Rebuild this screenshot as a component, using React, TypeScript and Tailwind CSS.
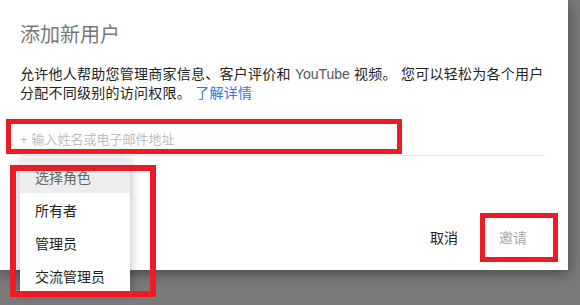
import React from "react";

const font = "font-['Liberation_Sans','Noto_Sans_CJK_SC',sans-serif]";

export default function App() {
  return (
    <div className={`relative w-[580px] h-[305px] overflow-hidden bg-[#7b7b7b] ${font}`}>
      <div className="flex flex-col w-[568px] h-[270px] bg-white pl-[20px] shadow-[0_3px_14px_rgba(0,0,0,0.45)]">
        <div className="pt-[21px] text-[20px] leading-[28px] text-[#777777]">添加新用户</div>
        <div className="mt-[16px] text-[14px] leading-[19px] tracking-[0.25px] text-[#222222] whitespace-nowrap">
          允许他人帮助您管理商家信息、客户评价和 <span className="text-[#555555] tracking-normal">YouTube</span> 视频。 您可以轻松为各个用户
          <br />
          分配不同级别的访问权限。 <span className="text-[#3a74e6]">了解详情</span>
        </div>
        <div className="mt-[22px] w-[525px] h-[31px] flex items-center border-b border-[#ebebeb] text-[13px] text-[#bdbdbd]">
          <span className="mr-[4px]">+</span>输入姓名或电子邮件地址
        </div>
        <div className="mt-auto mb-[14px] mr-[41px] h-[36px] flex items-center justify-end gap-[41px] text-[14px]">
          <span className="text-[#222222]">取消</span>
          <span className="text-[#a8a8a8]">邀请</span>
        </div>
      </div>

      <div className="absolute left-[20px] top-[160px] w-[110px] bg-white shadow-[0_2px_10px_rgba(0,0,0,0.3)] text-[14px]">
        <div className="h-[33px] flex items-center pl-[15px] pt-[4px] bg-[#eeeeee] text-[#666666]">选择角色</div>
        <div className="h-[33px] flex items-center pl-[15px] pt-[4px] text-[#222222]">所有者</div>
        <div className="h-[33px] flex items-center pl-[15px] pt-[4px] text-[#222222]">管理员</div>
        <div className="h-[33px] flex items-center pl-[15px] pt-[4px] text-[#222222]">交流管理员</div>
      </div>

      <div className="absolute left-[6px] top-[119px] w-[396px] h-[35px] border-[5px] border-[#ed1c24]" />
      <div className="absolute left-[10px] top-[165px] w-[146px] h-[132px] border-[6px] border-[#ed1c24]" />
      <div className="absolute left-[480px] top-[213px] w-[78px] h-[49px] border-[5px] border-[#ed1c24]" />
    </div>
  );
}
